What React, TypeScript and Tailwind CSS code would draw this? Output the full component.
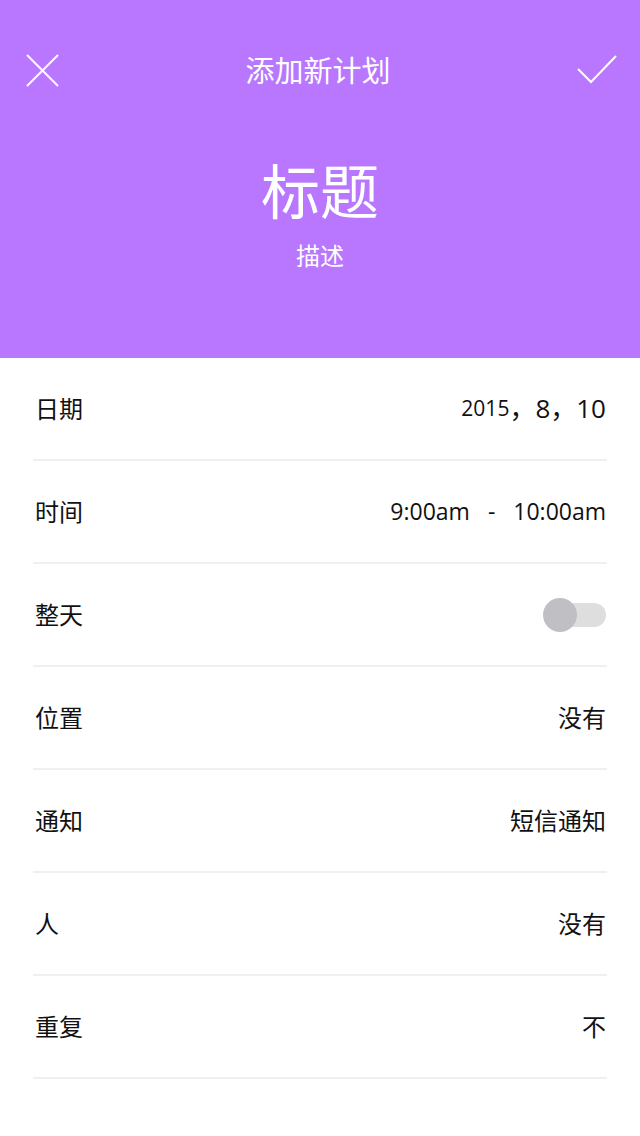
import React, { useState } from "react";

const font = { fontFamily: '"Open Sans", "Noto Sans CJK SC", sans-serif' };

const rows: { label: string; value?: string }[] = [
    { label: "位置", value: "没有" },
    { label: "通知", value: "短信通知" },
    { label: "人", value: "没有" },
    { label: "重复", value: "不" },
];

const Row: React.FC<{ label: string; children: React.ReactNode }> = ({ label, children }) => (
    <div className="mx-[33px] h-[103px] flex items-center justify-between border-b-2 border-[#f0f0f0]">
        <span className="pl-[2px] text-[24px] text-[#111]">{label}</span>
        <div className="pr-[1px] flex items-center text-[#111]">{children}</div>
    </div>
);

export default function App() {
    const [allDay, setAllDay] = useState(false);

    return (
        <div className="w-[640px] h-[1136px] bg-white" style={font}>
            {/* header */}
            <div className="h-[358px] bg-[#b877fe] text-white flex flex-col">
                <div className="h-[140px] px-[24px] flex items-center justify-between">
                    <svg width="34" height="34" viewBox="0 0 34 34" className="ml-[1px]">
                        <path d="M2 2 L33 33 M33 2 L2 33" stroke="white" strokeWidth="2" fill="none" />
                    </svg>
                    <span className="text-[29px] leading-none">添加新计划</span>
                    <svg width="40" height="30" viewBox="0 0 40 30" className="mr-[-1px]">
                        <path d="M1 14 L14 27 L39 1" stroke="white" strokeWidth="2" fill="none" />
                    </svg>
                </div>
                <div className="flex flex-col items-center">
                    <span className="text-[59px] leading-none mt-[22px]">标题</span>
                    <span className="text-[24px] leading-none mt-[23px]">描述</span>
                </div>
            </div>

            {/* list */}
            <Row label="日期">
                <span className="text-[21px]">2015</span>
                <span className="text-[26px]">，8，10</span>
            </Row>
            <Row label="时间">
                <span className="text-[23px]">9:00am</span>
                <span className="text-[23px] mx-[18px]">-</span>
                <span className="text-[23px]">10:00am</span>
            </Row>
            <Row label="整天">
                <button
                    onClick={() => setAllDay(!allDay)}
                    className="relative w-[63px] h-[34px] flex items-center"
                >
                    <span className="ml-auto w-[48px] h-[24px] rounded-full bg-[#dedede]" />
                    <span
                        className={
                            allDay
                                ? "absolute right-0 top-0 w-[34px] h-[34px] rounded-full bg-[#b877fe]"
                                : "absolute left-0 top-0 w-[34px] h-[34px] rounded-full bg-[#c0bfc4]"
                        }
                    />
                </button>
            </Row>
            {rows.map((r) => (
                <Row key={r.label} label={r.label}>
                    <span className="text-[24px]">{r.value}</span>
                </Row>
            ))}
        </div>
    );
}
